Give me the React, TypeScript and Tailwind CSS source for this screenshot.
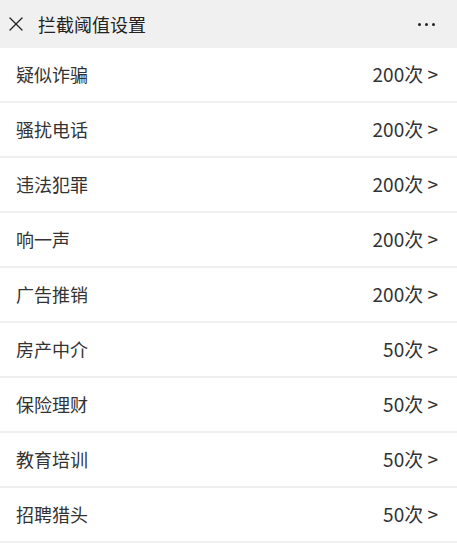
import { X } from "lucide-react";

const items: { name: string; count: number }[] = [
  { name: "疑似诈骗", count: 200 },
  { name: "骚扰电话", count: 200 },
  { name: "违法犯罪", count: 200 },
  { name: "响一声", count: 200 },
  { name: "广告推销", count: 200 },
  { name: "房产中介", count: 50 },
  { name: "保险理财", count: 50 },
  { name: "教育培训", count: 50 },
  { name: "招聘猎头", count: 50 },
];

export default function App() {
  return (
    <div
      className="min-h-screen w-[457px] bg-white text-[#333333]"
      style={{ fontFamily: '"Noto Sans CJK SC", "Noto Sans", sans-serif' }}
    >
      <header className="flex h-[48px] items-center justify-between bg-[#f0f0f0] pl-[4px] pr-[22px]">
        <div className="flex items-center">
          <X className="h-[24px] w-[24px] text-[#222]" strokeWidth={1.3} />
          <span className="ml-[10px] text-[18px] text-[#222]">拦截阈值设置</span>
        </div>
        <div className="flex items-center gap-[4px]">
          <span className="h-[3px] w-[3px] rounded-full bg-[#222]" />
          <span className="h-[3px] w-[3px] rounded-full bg-[#222]" />
          <span className="h-[3px] w-[3px] rounded-full bg-[#222]" />
        </div>
      </header>
      <ul>
        {items.map((it) => (
          <li
            key={it.name}
            className="flex h-[55px] items-center justify-between border-b-2 border-[#f0f0f0] pl-[16px] pr-[19px] text-[18px]"
          >
            <span>{it.name}</span>
            <span className="text-[19px]">{it.count}次 &gt;</span>
          </li>
        ))}
      </ul>
    </div>
  );
}
